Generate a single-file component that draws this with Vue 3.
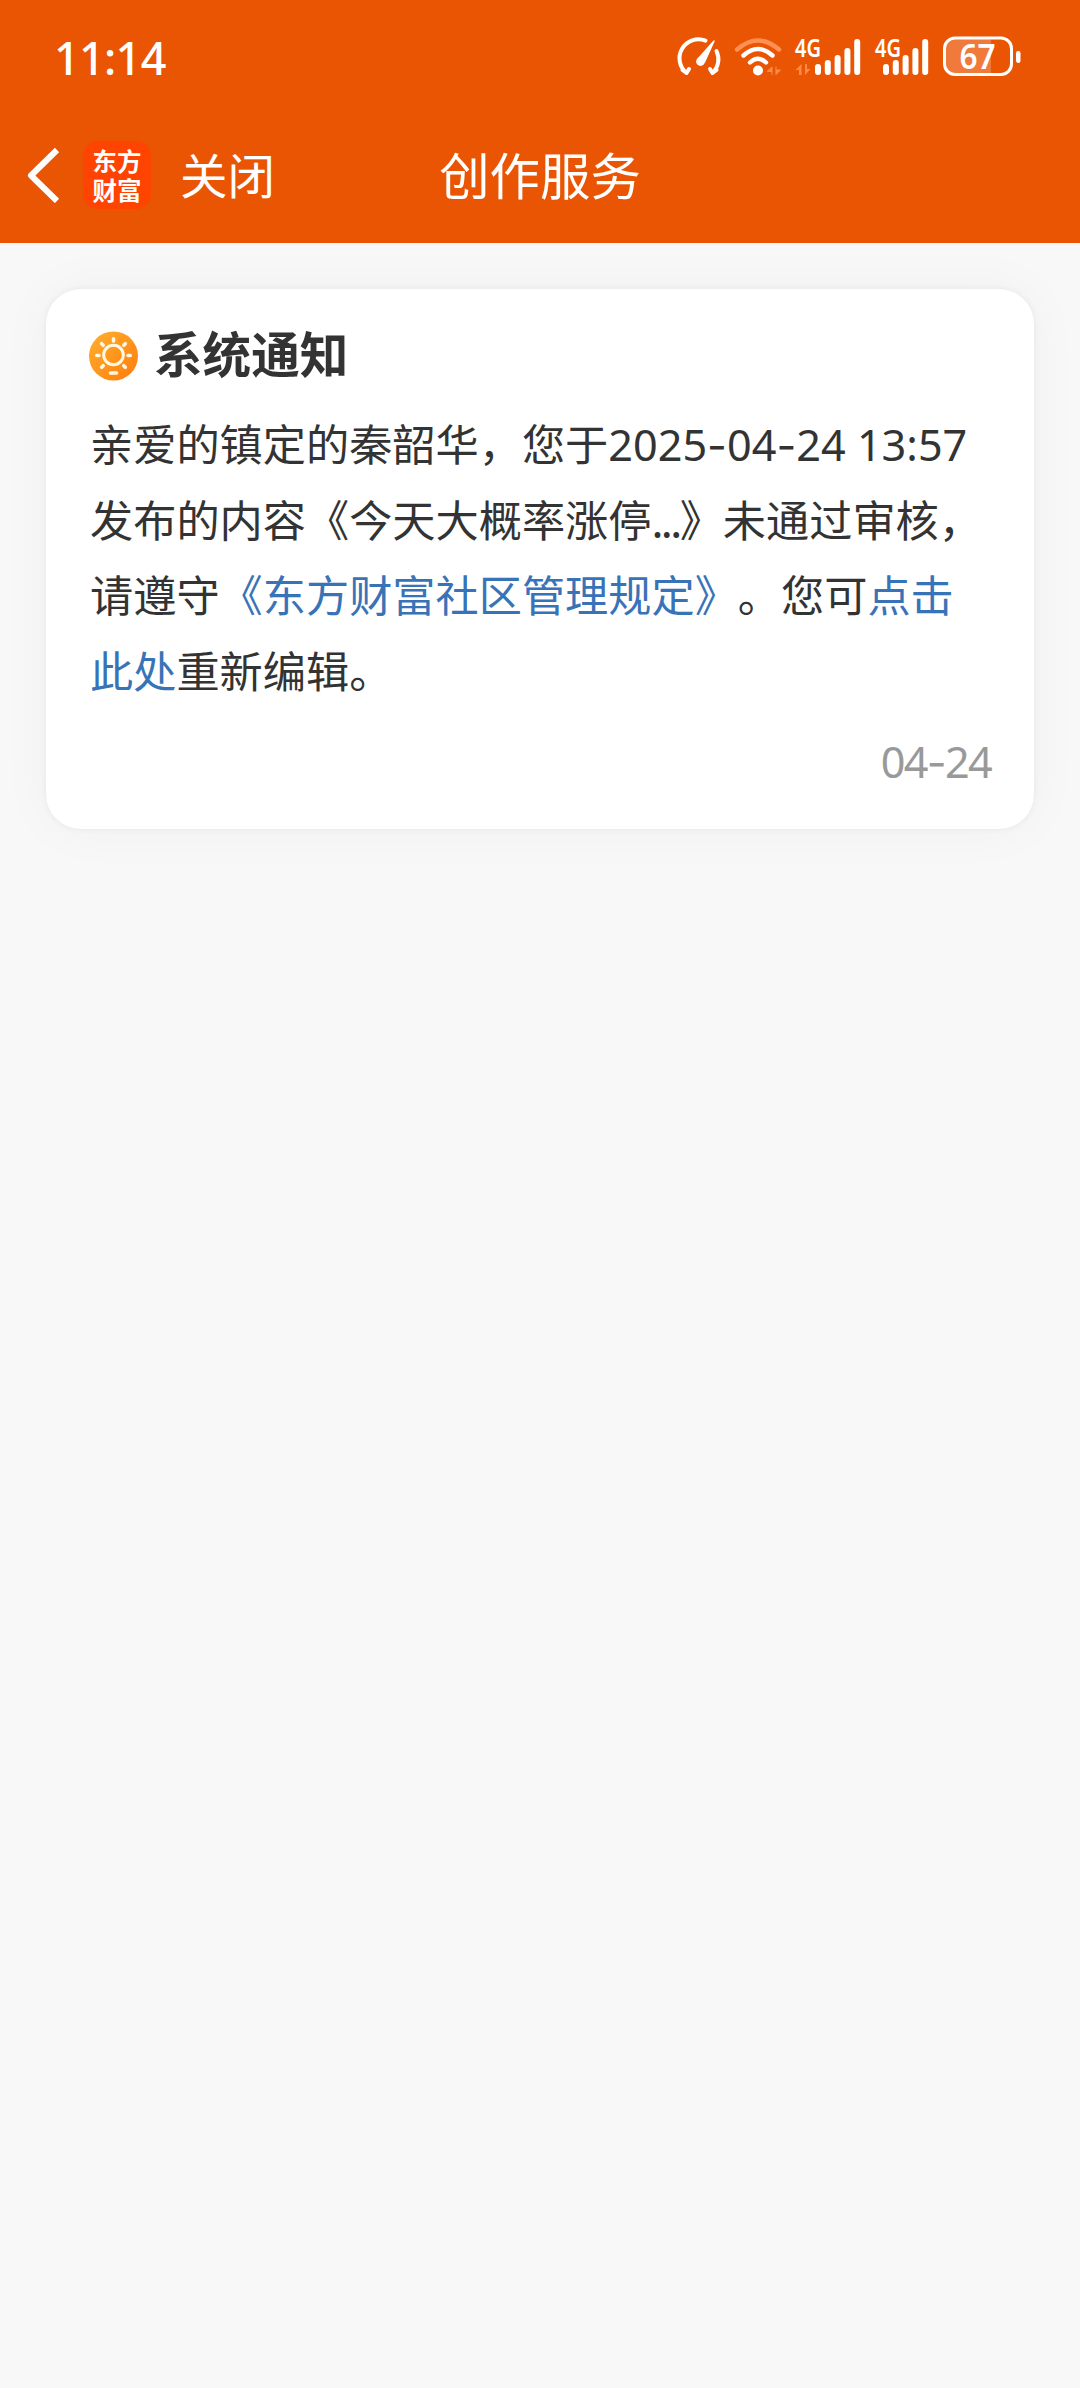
<script setup>
const signals = [
  { id: 1, left: 20, width: 66, data: true },
  { id: 2, left: 8, width: 54, data: false },
]
const bars = [11, 15, 20, 27, 36]
const rays = [0, 45, 90, 135, 225, 270, 315]
</script>

<template>
  <div class="page">
    <header class="header">
      <div class="status">
        <span class="time">11:14</span>
        <div class="tray">
          <svg class="gauge" width="44" height="40" viewBox="0 0 44 40" fill="none" stroke="#fff" stroke-width="4" stroke-linecap="round" stroke-linejoin="round">
            <path d="M27.500 4.600A19 19 0 0 0 8.500 37L11 33M8.500 37L4.500 34M38.500 15A19 19 0 0 1 34.500 37L32 33M34.500 37L38.500 34" />
            <path d="M20.500 22.500L36 5L26.500 26Z" fill="#fff" stroke-width="1.500" />
            <circle cx="22.500" cy="25.500" r="4.400" fill="#fff" stroke="none" />
          </svg>
          <svg class="wifi" width="48" height="40" viewBox="0 0 48 40" fill="none" stroke="#fff" stroke-width="4.400" stroke-linecap="round">
            <path d="M3 13.500Q24 -4.500 45 13.500" stroke="#ff8f52" />
            <path d="M9.500 19.500Q24 6.500 38.500 19.500" />
            <path d="M16 26.500Q24 19 32 26.500" />
            <circle cx="24" cy="34.500" r="5" fill="#fff" stroke="none" />
            <path d="M38 38.500V31L33 35.500H38M42 31V38.500L46.500 34H42" fill="#ff8a4b" stroke="#ff8a4b" stroke-width="1" />
          </svg>
          <svg v-for="s in signals" :key="s.id" :class="'signal-' + s.id" :width="s.width" height="40" :viewBox="`0 0 ${s.width} 40`">
            <text class="net" x="0" y="21" textLength="26" lengthAdjust="spacingAndGlyphs">4G</text>
            <path v-if="s.data" d="M6.500 39V28L0.500 34H4V39ZM10 28V39L15.500 33H12V28Z" fill="#ff8a4b" />
            <rect v-for="(h, i) in bars" :key="i" :x="s.left + i * 9.800" :y="39 - h" width="6" :height="h" rx="3" fill="#fff" />
          </svg>
          <svg class="battery" width="79" height="40" viewBox="0 0 79 40">
            <path d="M11 3H48V37H11Q3 37 3 28V12Q3 3 11 3Z" fill="#f07a3b" />
            <rect x="1.500" y="2" width="67" height="36.500" rx="10.500" fill="none" stroke="#fff" stroke-width="3" />
            <rect x="73" y="15" width="4.500" height="12" rx="2.200" fill="#fff" />
            <text class="level" x="16.500" y="33" textLength="36" lengthAdjust="spacingAndGlyphs">67</text>
          </svg>
        </div>
      </div>
      <nav class="nav">
        <div class="nav-left">
          <svg class="back" width="34" height="56" viewBox="0 0 34 56" fill="none" stroke="#fff" stroke-width="6">
            <path d="M31 3L5 28.500L31 54" stroke-linejoin="round" />
          </svg>
          <div class="logo"><span>东方</span><span>财富</span></div>
          <span class="close">关闭</span>
        </div>
        <h1 class="title">创作服务</h1>
        <div class="nav-right"></div>
      </nav>
    </header>

    <main class="content">
      <article class="card">
        <div class="card-head">
          <svg width="50" height="50" viewBox="0 0 50 50">
            <defs>
              <linearGradient id="sun" x1="0" y1="0" x2="1" y2="1">
                <stop offset="0" stop-color="#ffb02e" />
                <stop offset="1" stop-color="#ff7b0d" />
              </linearGradient>
            </defs>
            <circle cx="24.500" cy="25" r="24.500" fill="url(#sun)" />
            <circle cx="24.500" cy="24" r="9.800" fill="none" stroke="#fff8e0" stroke-width="3" />
            <path v-for="r in rays" :key="r" d="M24.500 7.800V10" :transform="`rotate(${r} 24.500 24.500)`" stroke="#fff8e0" stroke-width="3.600" stroke-linecap="round" />
            <path d="M21.500 42H27.500" stroke="#fff8e0" stroke-width="3.600" stroke-linecap="round" />
          </svg>
          <h2>系统通知</h2>
        </div>
        <p class="message">亲爱的镇定的秦韶华，您于<span class="num">2025<i>-</i>04<i>-</i>24 13:57</span>发布的内容《今天大概率涨停<span class="dots">...</span>》未通过审核，请遵守<a>《东方财富社区管理规定》</a>。您可<a>点击此处</a>重新编辑。</p>
        <div class="date num">04<i>-</i>24</div>
      </article>
    </main>
  </div>
</template>

<style>
body {
  margin: 0;
  background: #f8f8f8;
}
</style>

<style scoped>
.page {
  width: 1080px;
  height: 2388px;
  overflow: hidden;
  background: #f8f8f8;
  font-family: "Noto Sans CJK SC", sans-serif;
  text-spacing-trim: space-all;
}
.header {
  height: 243px;
  background: #ea5504;
  color: #fff;
}
.status {
  display: flex;
  justify-content: space-between;
  height: 112px;
  padding: 0 58px 0 54px;
  box-sizing: border-box;
}
.time {
  font: 500 45px/60px "Noto Sans", sans-serif;
  margin-top: 28px;
  letter-spacing: -0.7px;
}
.tray {
  display: flex;
  margin-top: 36px;
}
.tray svg { overflow: visible; }
.gauge { margin-right: 12px; }
.wifi { margin-right: 13px; }
.signal-1 { margin-right: 14px; }
.signal-2 { margin-right: 14px; }
.net {
  font: 600 25px "Noto Sans", sans-serif;
  fill: #fff;
}
.level {
  font: 600 34px "Noto Sans", sans-serif;
  fill: #fff;
}
.nav {
  display: flex;
  align-items: center;
  height: 126px;
}
.nav-left,
.nav-right {
  flex: 1;
  display: flex;
  align-items: center;
}
.back { margin-left: 26px; }
.logo {
  display: flex;
  flex-direction: column;
  align-items: center;
  justify-content: center;
  width: 68px;
  height: 68px;
  margin-left: 23px;
  border-radius: 15px;
  background: #ff4300;
  font-size: 24.500px;
  font-weight: 700;
  line-height: 29px;
}
.close {
  margin: 0 0 3px 29px;
  font-size: 47.500px;
  line-height: 70px;
}
.title {
  margin: 0 0 3px;
  font-size: 50.400px;
  font-weight: 400;
  line-height: 74px;
}
.content { padding: 46px; }
.card {
  height: 540px;
  padding: 32px 43px 0;
  box-sizing: border-box;
  border-radius: 35px;
  background: #fff;
  box-shadow: 0 0 54px rgba(0, 0, 0, 0.04), 0 0 6px rgba(0, 0, 0, 0.06);
}
.card-head {
  display: flex;
  align-items: center;
  height: 70px;
}
h2 {
  margin: 0 0 7px 15px;
  font-size: 48.600px;
  font-weight: 700;
  line-height: 63px;
  color: #333;
}
.message {
  margin: 14px 0 0;
  padding-left: 1px;
  font-size: 43.200px;
  line-height: 75.600px;
  color: #333;
}
.message a { color: #3973b7; }
.num { font-family: "Noto Sans", sans-serif; }
.message .num { line-height: 1; }
.num i {
  font-family: Inter, sans-serif;
  font-style: normal;
  line-height: 1;
}
.dots { letter-spacing: -2.600px; }
.date {
  margin-top: 17px;
  font-size: 43.200px;
  line-height: 76px;
  text-align: right;
  color: #999;
  letter-spacing: -1.700px;
}
</style>
